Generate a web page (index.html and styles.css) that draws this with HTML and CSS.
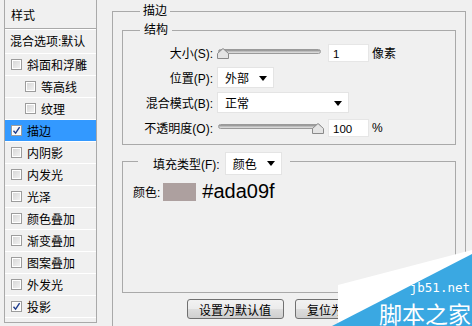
FILE: index.html
```html
<!DOCTYPE html>
<html lang="zh-CN">
<head>
    <meta charset="UTF-8">
    <title>图层样式 - 描边</title>
    <link rel="stylesheet" href="styles.css">
</head>
<body>
    <div class="dialog">
        <ul class="style-list">
            <li class="list-head">样式</li>
            <li class="list-blend">混合选项:默认</li>
            <li class="item"><span class="box"></span>斜面和浮雕</li>
            <li class="item sub"><span class="box"></span>等高线</li>
            <li class="item sub"><span class="box"></span>纹理</li>
            <li class="item active"><span class="box checked"><svg viewBox="0 0 9 9"><path d="M1.5 4.8 L3.6 7.2 L7.6 1.2" /></svg></span>描边</li>
            <li class="item"><span class="box"></span>内阴影</li>
            <li class="item"><span class="box"></span>内发光</li>
            <li class="item"><span class="box"></span>光泽</li>
            <li class="item"><span class="box"></span>颜色叠加</li>
            <li class="item"><span class="box"></span>渐变叠加</li>
            <li class="item"><span class="box"></span>图案叠加</li>
            <li class="item"><span class="box"></span>外发光</li>
            <li class="item"><span class="box checked"><svg viewBox="0 0 9 9"><path d="M1.5 4.8 L3.6 7.2 L7.6 1.2" /></svg></span>投影</li>
        </ul>

        <div class="panel">
            <fieldset class="group outer">
                <legend>描边</legend>

                <fieldset class="group structure">
                    <legend>结构</legend>
                    <div class="form">
                        <label>大小(S):</label>
                        <div class="control">
                            <div class="slider">
                                <div class="track"></div>
                                <svg class="thumb" style="left: 0px" viewBox="0 0 12 11"><path d="M0.5 10.5 V5.5 L6 0.5 L11.5 5.5 V10.5 Z" /></svg>
                            </div>
                            <span class="field">1</span>
                            <span class="unit">像素</span>
                        </div>

                        <label>位置(P):</label>
                        <div class="control">
                            <span class="select short">外部<i class="arrow"></i></span>
                        </div>

                        <label>混合模式(B):</label>
                        <div class="control">
                            <span class="select wide">正常<i class="arrow"></i></span>
                        </div>

                        <label>不透明度(O):</label>
                        <div class="control">
                            <div class="slider">
                                <div class="track"></div>
                                <svg class="thumb" style="left: 95px" viewBox="0 0 12 11"><path d="M0.5 10.5 V5.5 L6 0.5 L11.5 5.5 V10.5 Z" /></svg>
                            </div>
                            <span class="field">100</span>
                            <span class="unit">%</span>
                        </div>
                    </div>
                </fieldset>

                <fieldset class="group fill">
                    <legend>
                        <span class="fill-label">填充类型(F):</span>
                        <span class="select short">颜色<i class="arrow"></i></span>
                    </legend>
                    <div class="color-row">
                        <span>颜色:</span>
                        <span class="swatch"></span>
                        <span class="hex">#ada09f</span>
                    </div>
                </fieldset>

                <div class="buttons">
                    <button>设置为默认值</button>
                    <button>复位为默认值</button>
                </div>
            </fieldset>
        </div>
    </div>

    <div class="watermark">
        <svg class="wm-shape" viewBox="0 0 140 76">
            <polygon class="wm-white" points="6,35 140,0 140,8 10,76 6,76" />
            <polygon class="wm-blue" points="0,76 140,4 140,76" />
        </svg>
        <span class="wm-site">jb51.net</span>
        <span class="wm-name">脚本之家</span>
    </div>
</body>
</html>
```

FILE: styles.css
```css
* {
    margin: 0;
    padding: 0;
    box-sizing: border-box;
}

body {
    width: 472px;
    height: 326px;
    overflow: hidden;
    position: relative;
    background: #f0f0f0;
    font-family: "Liberation Sans", "Noto Sans CJK SC", sans-serif;
    font-size: 12px;
    color: #000;
}

.dialog {
    display: flex;
    height: 326px;
}

/* left list of effects */

.style-list {
    list-style: none;
    margin-left: 4px;
    width: 93px;
    border-left: 1px solid #a9a9a9;
    border-right: 1px solid #a9a9a9;
    border-bottom: 1px solid #a9a9a9;
    height: 323px;
}

.style-list li {
    display: flex;
    align-items: center;
    white-space: nowrap;
}

.list-head {
    height: 29px;
    padding-left: 6px;
    border-bottom: 1px solid #a9a9a9;
    box-shadow: 0 1px 0 #fff;
}

.list-blend {
    height: 23px;
    margin-top: 2px;
    padding: 0 0 4px 5px;
    border-bottom: 1px solid #fff;
}

.item {
    height: 22px;
    padding-left: 6px;
    border-bottom: 1px solid #fff;
}

.item.sub {
    padding-left: 20px;
}

.item.active {
    background: #3399ff;
}

.box {
    width: 11px;
    height: 11px;
    margin-right: 5px;
    border: 1px solid #9c9c9c;
    background: linear-gradient(135deg, #d4d4d4, #f4f4f4);
    box-shadow: inset 0 0 0 1px #fff;
    display: flex;
    align-items: center;
    justify-content: center;
}

.box.checked {
    background: #f6f6f6;
}

.box svg {
    width: 9px;
    height: 9px;
    fill: none;
    stroke: #1f3c8c;
    stroke-width: 1.4;
}

/* right panel */

.panel {
    margin-left: 15px;
    width: 354px;
}

.group {
    border: 1px solid #a9a9a9;
    min-width: 0;
}

.group legend {
    line-height: 22px;
    padding: 0 3px;
}

.outer {
    height: 340px;
    padding: 0 9px;
}

.outer > legend {
    margin-left: 18px;
}

.structure {
    height: 123px;
    padding: 0;
}

.structure > legend {
    line-height: 16px;
    margin-left: 17px;
    padding: 0 4px;
}

.form {
    display: grid;
    grid-template-columns: 90px auto;
    grid-auto-rows: 25px;
    column-gap: 4px;
    align-items: center;
    padding-top: 2px;
}

.form label {
    text-align: right;
}

.control {
    display: flex;
    align-items: center;
}

.slider {
    position: relative;
    width: 104px;
    height: 12px;
    margin-right: 7px;
}

.track {
    position: absolute;
    left: 1px;
    right: 0;
    top: 2px;
    height: 5px;
    border-radius: 3px;
    background: linear-gradient(#8c8c8c, #c8c8c8 60%, #e2e2e2);
    border: 1px solid #9a9a9a;
}

.thumb {
    position: absolute;
    top: 1px;
    width: 12px;
    height: 11px;
    fill: #e4e4e4;
    stroke: #8a8a8a;
    stroke-width: 1;
}

.field {
    width: 41px;
    height: 18px;
    line-height: 18px;
    padding-left: 4px;
    background: #fff;
    border: 1px solid #e6e6e6;
    font-size: 11.5px;
}

.unit {
    margin-left: 3px;
}

.select {
    position: relative;
    display: flex;
    align-items: center;
    height: 21px;
    padding-left: 7px;
    background: #fff;
    border: 1px solid #e4e4e4;
}

.select.short {
    width: 57px;
}

.select.wide {
    width: 132px;
}

.arrow {
    position: absolute;
    right: 6px;
    top: 8px;
    border-left: 4px solid transparent;
    border-right: 4px solid transparent;
    border-top: 5px solid #000;
}

.fill {
    height: 145px;
    margin-top: 3px;
    padding: 0;
}

.fill > legend {
    display: flex;
    align-items: center;
    margin-left: 15px;
    padding: 4px 8px 0 15px;
    line-height: normal;
}

.fill-label {
    margin-right: 5px;
}

.fill .select {
    height: 23px;
}

.color-row {
    display: flex;
    align-items: center;
    padding: 5px 0 0 10px;
}

.swatch {
    width: 33px;
    height: 18px;
    margin: 0 6px 0 3px;
    background: #ada09f;
}

.hex {
    font-size: 20px;
}

.buttons {
    display: flex;
    justify-content: center;
    gap: 11px;
    margin-top: 6px;
}

.buttons button {
    width: 97px;
    height: 20px;
    font-family: inherit;
    font-size: 12px;
    border: 1px solid #707070;
    border-radius: 3px;
    background: linear-gradient(#f2f2f2, #ebebeb 50%, #dddddd 51%, #cfcfcf);
}

/* site watermark */

.watermark {
    position: absolute;
    right: 0;
    bottom: 0;
    width: 140px;
    height: 76px;
}

.wm-shape {
    position: absolute;
    inset: 0;
    width: 140px;
    height: 76px;
}

.wm-white {
    fill: #fff;
}

.wm-blue {
    fill: #3aa8e2;
}

.wm-site {
    position: absolute;
    right: 2px;
    top: 31px;
    color: #fff;
    font-family: "DejaVu Sans Mono", monospace;
    font-size: 12.5px;
    line-height: 13px;
}

.wm-name {
    position: absolute;
    right: 1px;
    top: 51px;
    color: #fff;
    font-family: "Noto Sans CJK SC", sans-serif;
    font-size: 23px;
    line-height: 24px;
}
```
